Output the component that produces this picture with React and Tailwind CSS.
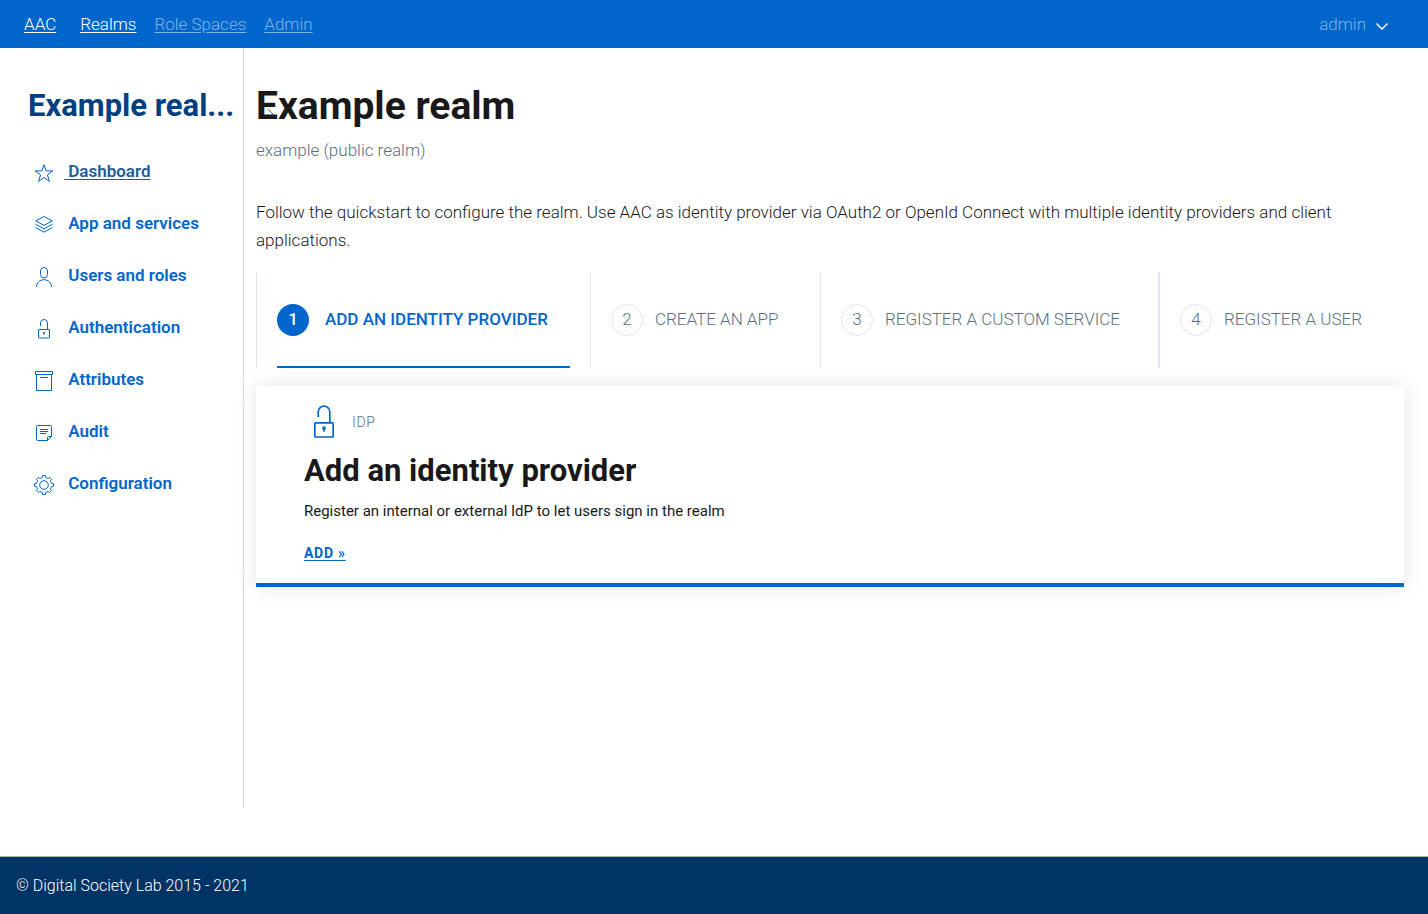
import React from "react";

const point = (radius, degrees) => {
  const a = (degrees * Math.PI) / 180;
  return `${(12 + radius * Math.sin(a)).toFixed(2)} ${(12 - radius * Math.cos(a)).toFixed(2)}`;
};

const gearPath =
  [0, 45, 90, 135, 180, 225, 270, 315]
    .map(
      (d, i) =>
        `${i ? "L" : "M"}${point(7.9, d - 11)}L${point(9.5, d - 9)}L${point(9.5, d + 9)}L${point(7.9, d + 11)}Q${point(7.2, d + 22.5)} ${point(7.9, d + 34)}`
    )
    .join("") + "Z";

const shapes = {
  star: <path d="M12 3.6l2.1 6.3h6.7l-5.4 4 2.1 6.6-5.5-4-5.5 4 2.1-6.6-5.4-4h6.7z" />,
  layers: (
    <>
      <path d="M12 3.5l8.3 4.4-8.3 4.4-8.3-4.4z" />
      <path d="M3.5 11.3l8.5 4.5 8.5-4.5M3.5 14.6l8.5 4.5 8.5-4.5" />
    </>
  ),
  user: (
    <>
      <rect x="8.5" y="2.5" width="7" height="10.4" rx="3.5" />
      <path d="M4.5 22c0-4.3 3.3-7.3 7.5-7.3s7.5 3 7.5 7.3" />
    </>
  ),
  lock: (
    <>
      <rect x="6.5" y="12.5" width="11" height="8.5" rx=".5" />
      <path d="M8.5 9V6a3.5 3.5 0 0 1 7 0v6.5" />
      <path d="M12 15.7v2.2" />
      <circle cx="12" cy="15.7" r=".6" fill="currentColor" />
    </>
  ),
  archive: <path d="M3.5 2.500h17v3h-17zM4.500 5.500v16h15v-16M8 8.500h8" />,
  note: (
    <>
      <path d="M5.500 4.500h13a1 1 0 0 1 1 1v10l-4 4h-10a1 1 0 0 1-1-1v-13a1 1 0 0 1 1-1zM15.500 19.500v-3a1 1 0 0 1 1-1h3" />
      <path d="M8 8.500h8M8 10.500h8M8 12.500h6" />
    </>
  ),
  gear: (
    <>
      <path d={gearPath} strokeLinejoin="round" />
      <circle cx="12" cy="12" r="4.300" />
    </>
  ),
};

function Icon({ name, className }) {
  return (
    <svg viewBox="0 0 24 24" fill="none" stroke="currentColor" aria-hidden="true" className={className}>
      {shapes[name]}
    </svg>
  );
}

const navItems = [
  { label: "Dashboard", icon: "star", active: true },
  { label: "App and services", icon: "layers" },
  { label: "Users and roles", icon: "user" },
  { label: "Authentication", icon: "lock" },
  { label: "Attributes", icon: "archive" },
  { label: "Audit", icon: "note" },
  { label: "Configuration", icon: "gear" },
];

const steps = ["Add an identity provider", "Create an app", "Register a custom service", "Register a user"];

function Header() {
  return (
    <header className="flex h-12 items-center bg-[#0066cc] pl-6 pr-[38px] pt-[2px] text-[17px] font-light text-white">
      <a href="#home" className="mr-6 underline underline-offset-2">AAC</a>
      <nav className="flex gap-[18px]">
        <a href="#realms" className="underline underline-offset-2">Realms</a>
        <a href="#spaces" className="text-[#80b3e6] underline underline-offset-2">Role Spaces</a>
        <a href="#admin" className="text-[#80b3e6] underline underline-offset-2">Admin</a>
      </nav>
      <button type="button" className="ml-auto flex items-center gap-2 font-light text-[#80b3e6]">
        admin
        <svg viewBox="0 0 16 16" fill="none" stroke="#fff" strokeWidth="1.4" aria-hidden="true" className="size-4">
          <path d="M2.500 6.500L8 12l5.500-5.500" />
        </svg>
      </button>
    </header>
  );
}

function Sidebar() {
  return (
    <aside className="w-[244px] shrink-0 border-r border-[#d9dadb] pl-7 pr-2 pt-9">
      <h2 className="text-[31px] font-bold leading-[44px] text-[#004080]">Example real...</h2>
      <nav className="mt-[18px]">
        <ul>
          {navItems.map((item) => (
            <li key={item.label}>
              <a
                href="#section"
                className={
                  item.active
                    ? "flex h-[52px] items-center gap-2 pl-1 text-[17px] font-semibold text-[#1f5c99]"
                    : "flex h-[52px] items-center gap-2 pl-1 text-[17px] font-semibold text-[#0066cc]"
                }
              >
                <Icon name={item.icon} className="mt-[2px] size-6 shrink-0 text-[#0066cc]" />
                <span className={item.active ? "whitespace-pre underline underline-offset-2" : "whitespace-pre"}>
                  {" " + item.label}
                </span>
              </a>
            </li>
          ))}
        </ul>
      </nav>
    </aside>
  );
}

function Steps() {
  return (
    <ol className="mt-[18px] grid h-24 grid-cols-[334fr_230fr_338fr_246fr] text-[17px] uppercase">
      {steps.map((label, i) => (
        <li
          key={label}
          className={
            i === 3
              ? "min-w-0 border-l-2 border-[#dfe4f2] px-5"
              : "min-w-0 border-l border-[#dfe4f2] px-5"
          }
        >
          <div
            className={
              i === 0
                ? "flex h-full items-center gap-4 whitespace-nowrap border-b-2 border-[#0066cc] pt-[2px] font-medium text-[#0066cc]"
                : "flex h-full items-center gap-3 whitespace-nowrap font-light text-[#5b6f82]"
            }
          >
            <span
              className={
                i === 0
                  ? "flex size-8 shrink-0 items-center justify-center rounded-full bg-[#0066cc] text-white"
                  : "flex size-8 shrink-0 items-center justify-center rounded-full border border-[#dfe4f2]"
              }
            >
              {i + 1}
            </span>
            {label}
          </div>
        </li>
      ))}
    </ol>
  );
}

export default function App() {
  return (
    <div className="flex min-h-screen flex-col bg-white font-['Roboto',sans-serif] text-[#19191a]">
      <Header />
      <div className="mb-12 flex flex-1">
        <Sidebar />
        <main className="min-w-0 flex-1 pl-3 pr-6 pt-[33px]">
          <div className="relative">
            <h1 className="text-[39px] font-bold leading-[50px]">Example realm</h1>
            <svg viewBox="0 0 8 8" stroke="#0073e6" fill="none" aria-hidden="true" className="absolute left-3 top-7 size-2">
              <path d="M0 0l6 6" />
            </svg>
          </div>
          <p className="mt-[5px] text-[17px] font-light leading-7 text-[#5b6f82]">example (public realm)</p>
          <p className="mt-[34px] text-[17px] font-light leading-7">
            Follow the quickstart to configure the realm. Use AAC as identity provider via OAuth2 or OpenId Connect with
            multiple identity providers and client applications.
          </p>
          <Steps />
          <article className="mt-[18px] border-b-4 border-[#0066cc] bg-white px-12 pb-5 pt-4 shadow-[0_0_20px_0_rgba(0,0,0,0.1)]">
            <div className="flex h-10 items-center gap-2 text-sm font-light uppercase tracking-wider text-[#5b6f82]">
              <Icon name="lock" className="size-10 text-[#0066cc]" />
              IDP
            </div>
            <h2 className="mt-2 text-[31px] font-bold leading-[42px]">Add an identity provider</h2>
            <p className="mt-[7px] text-[15px] leading-6">Register an internal or external IdP to let users sign in the realm</p>
            <a href="#add" className="mt-5 block w-fit text-sm font-bold uppercase leading-5 tracking-wider text-[#0066cc] underline underline-offset-2">
              Add »
            </a>
          </article>
        </main>
      </div>
      <footer className="flex h-[58px] items-center border-t border-[#a9b2b0] bg-[#003366] px-4 font-light text-white">
        © Digital Society Lab 2015 - 2021
      </footer>
    </div>
  );
}
